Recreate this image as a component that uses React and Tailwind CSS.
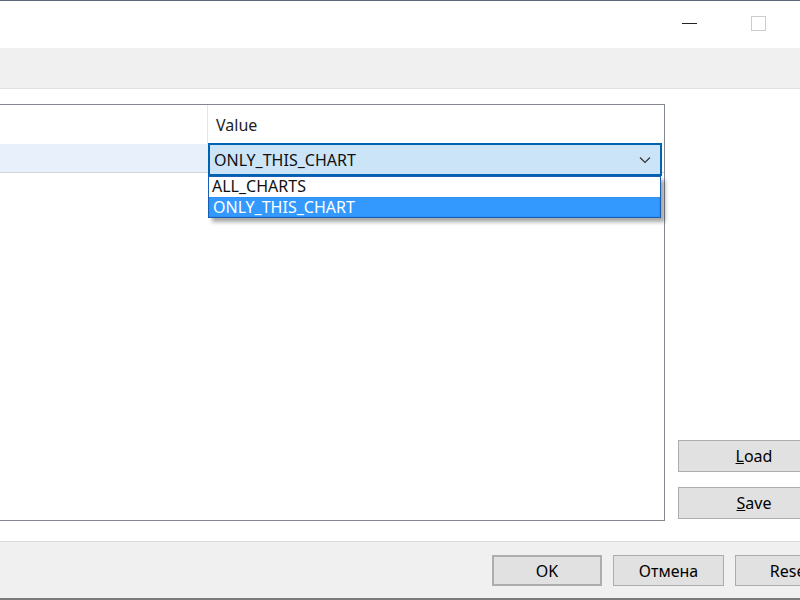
import React from "react";

function Btn({ children, className = "" }) {
  return (
    <div
      className={
        "flex items-center justify-center shrink-0 bg-[#e1e1e1] border border-[#adadad] text-[#000] " +
        className
      }
    >
      {children}
    </div>
  );
}

export default function App() {
  return (
    <div
      className="w-[800px] h-[600px] flex flex-col bg-white overflow-hidden text-[16px] text-black"
      style={{ fontFamily: '"Noto Sans", "Segoe UI", sans-serif' }}
    >
      {/* top border */}
      <div className="h-[1px] bg-[#5f6678] shrink-0" />
      {/* title bar */}
      <div className="h-[47px] shrink-0 bg-white flex items-start">
        <div className="flex-1" />
        <div className="w-[15px] h-[1px] bg-[#222] mt-[22px] mr-[54px]" />
        <div className="w-[15px] h-[15px] border border-[#cccccc] mt-[15px] mr-[34px]" />
      </div>
      {/* toolbar band */}
      <div className="h-[41px] shrink-0 bg-[#f0f0f0] border-b border-[#e0e0e0]" />
      {/* middle */}
      <div className="flex-1 flex bg-white pt-[15px] pb-[20px] overflow-hidden">
        <div className="w-[665px] shrink-0 border-t border-r border-b border-[#828790] relative flex flex-col">
          {/* header */}
          <div className="h-[39px] flex shrink-0">
            <div className="w-[207px]" />
            <div className="w-[1px] bg-[#e5e5e5]" />
            <div className="flex-1 flex items-center pl-[8px] text-[#1e1e1e]">Value</div>
          </div>
          {/* row */}
          <div className="h-[29px] flex shrink-0 border-b border-[#d5d5d5]">
            <div className="w-[208px] bg-[#e8f1fb]" />
            <div className="flex-1" />
          </div>
          <div className="flex-1" />

          {/* combobox editor */}
          <div className="absolute left-[208px] top-[38px] w-[454px] h-[33px] bg-[#cce4f7] border-2 border-[#0063b1] flex items-center pl-[4px] pr-[8px]">
            <span className="flex-1 text-[#111]">ONLY_THIS_CHART</span>
            <svg width="12" height="8" viewBox="0 0 12 8" className="mr-[1px]">
              <path d="M1 1.5 L6 6.5 L11 1.5" fill="none" stroke="#333" strokeWidth="1.2" />
            </svg>
          </div>
          {/* dropdown list */}
          <div className="absolute left-[208px] top-[71px] w-[453px] bg-white border border-[#1a5fb4] shadow-[4px_4px_4px_rgba(0,0,0,0.35)] flex flex-col leading-[19px]">
            <div className="h-[20px] pl-[3px] text-[#111]">ALL_CHARTS</div>
            <div className="h-[20px] pl-[3px] bg-[#3399ff] text-white border border-dotted border-[#b0682a]">
              ONLY_THIS_CHART
            </div>
          </div>
        </div>
        {/* right buttons */}
        <div className="w-[135px] shrink-0 flex flex-col justify-end pl-[13px]">
          <Btn className="h-[32px] w-[152px]">
            <span><span className="underline">L</span>oad</span>
          </Btn>
          <Btn className="h-[32px] w-[152px] mt-[15px] mb-[2px]">
            <span><span className="underline">S</span>ave</span>
          </Btn>
        </div>
      </div>
      {/* bottom bar */}
      <div className="h-[57px] shrink-0 bg-[#f0f0f0] border-t border-[#dadada] flex items-start pt-[13px] pl-[492px] gap-[11px] overflow-hidden">
        <Btn className="w-[110px] h-[31px] border-2 border-[#0078d7]">OK</Btn>
        <Btn className="w-[111px] h-[31px]">Отмена</Btn>
        <Btn className="w-[111px] h-[31px]">Reset</Btn>
      </div>
      <div className="h-[2px] shrink-0 bg-[#7a7a7a]" />
    </div>
  );
}
